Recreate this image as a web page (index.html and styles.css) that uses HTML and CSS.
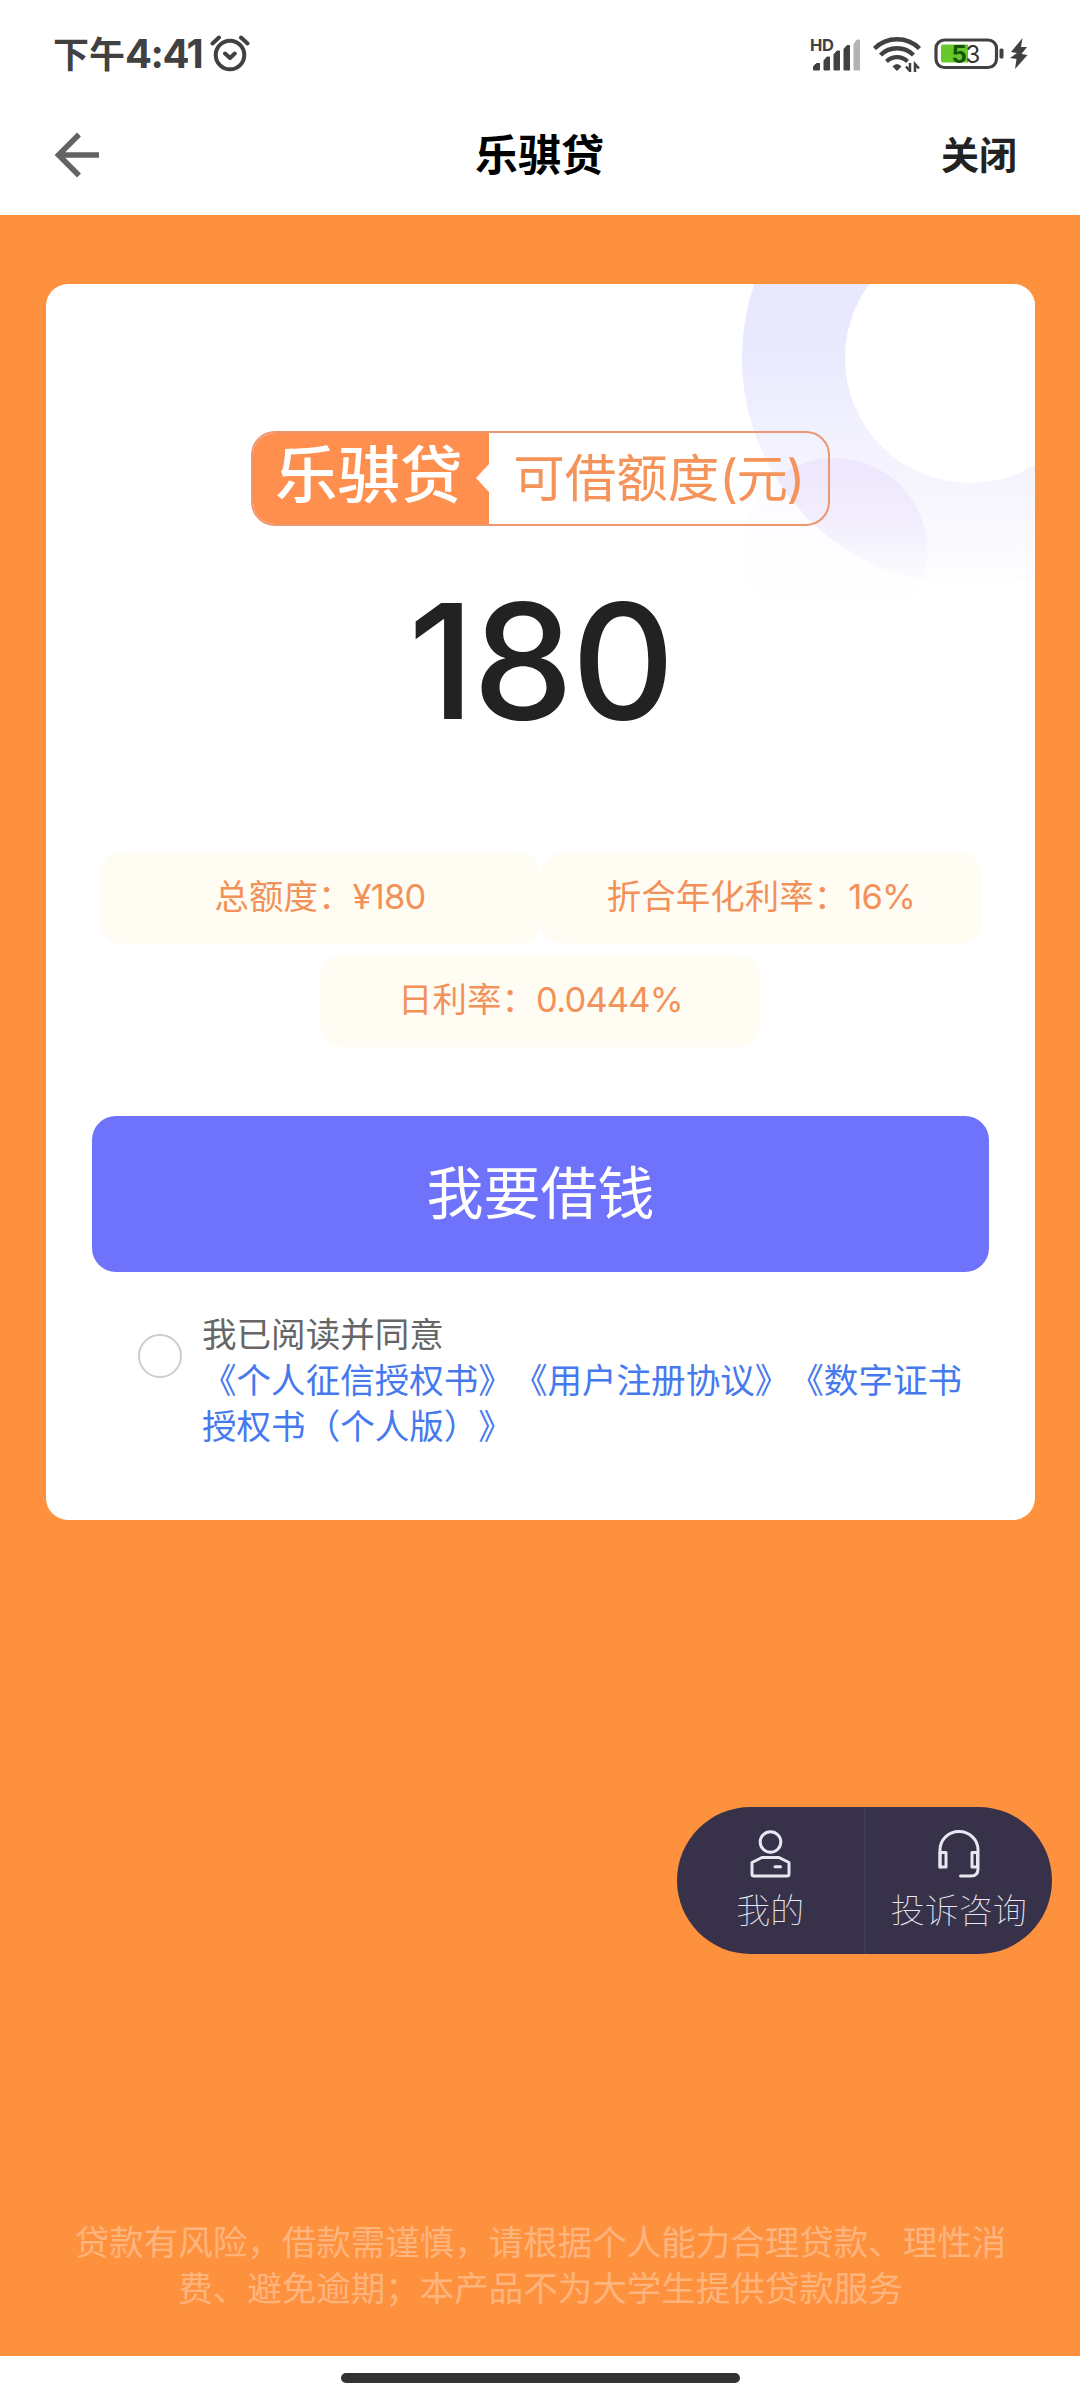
FILE: index.html
```html
<!DOCTYPE html>
<html lang="zh-CN">
<head>
<meta charset="utf-8">
<title>乐骐贷</title>
<link rel="stylesheet" href="styles.css">
</head>
<body>
<header class="top">
  <div class="status">
    <div class="status-left">
      <span class="time">下午<span class="clock">4:41</span></span>
      <svg class="alarm" width="40" height="38" viewBox="0 0 40 38" fill="none" stroke="#414141" stroke-width="4" stroke-linecap="round" stroke-linejoin="round">
        <circle cx="20" cy="21" r="14.3"/>
        <path d="M15 19.5l5 4.5 4.800-4.500M2.500 9.500l6.500-6M37.500 9.500l-6.500-6"/>
      </svg>
    </div>
    <div class="status-right">
      <svg class="signal" width="52" height="48" viewBox="0 -6 52 48">
        <text class="hd" x="0" y="14.500" textLength="24">HD</text>
        <g fill="#414141">
          <path d="M3.500 34V30.500l3-3h3V34zM14 34V24.500l3-3.500h2.500v13zM24 34V18.500l3-3.500h2.500V34zM34 34V13l3-3.500h2.500V34z" stroke="#414141" stroke-linejoin="round"/>
          <path d="M44 34V8l3-4h2.500V34z" fill="#b3b3b3" stroke="#b3b3b3" stroke-linejoin="round"/>
        </g>
      </svg>
      <svg class="wifi" width="48" height="36" viewBox="0 0 48 36" fill="none" stroke="#414141" stroke-width="4.300">
        <path d="M1.500 12.500a32 32 0 0 1 45 0M7.500 19a23.500 23.500 0 0 1 33 0M13.500 25.500a15 15 0 0 1 21 0"/>
        <path d="M24 35l-4.500-4.500q4.500-5 9 0z" fill="#414141" stroke="none"/>
        <path d="M37 27v8l-4-4.500M42 36v-8l4 4.500" stroke-width="2.500"/>
      </svg>
      <svg class="battery" width="70" height="32" viewBox="0 0 70 32">
        <rect x="2" y="2" width="60.500" height="27.500" rx="8.500" fill="none" stroke="#414141" stroke-width="3.200"/>
        <path d="M9 6.500h25v18H9a2 2 0 0 1-2-2v-14a2 2 0 0 1 2-2z" fill="#65c92b"/>
        <rect x="65.500" y="10.500" width="4" height="10" rx="1.500" fill="#414141"/>
        <text class="level level-on" x="17.500" y="24.500">5</text>
        <text class="level" x="31.500" y="24.500">3</text>
      </svg>
      <svg class="bolt" width="18" height="32" viewBox="0 0 18 32"><path d="M12.500 0L1 14l6 1-7 5 6.500 1L5 31 17.500 17l-6-1 5.500-7h-6z" fill="#414141"/></svg>
    </div>
  </div>
  <nav class="nav">
    <svg class="back" width="46" height="46" viewBox="0 0 46 46" fill="none" stroke="#636363" stroke-width="5.500"><path d="M25 2.500L4.500 23 25 43.500M5 23h40"/></svg>
    <h1 class="title">乐骐贷</h1>
    <span class="close">关闭</span>
  </nav>
</header>
<main class="page">
  <section class="card">
    <svg class="rings" width="294" height="366" viewBox="741 284 294 366">
      <defs>
        <linearGradient id="ring" gradientUnits="userSpaceOnUse" x1="0" y1="284" x2="0" y2="588">
          <stop offset="0" stop-color="#e8e8fe"/><stop offset=".25" stop-color="#eaeafe"/><stop offset=".5" stop-color="#f2f1fe"/><stop offset="1" stop-color="#fefefe"/>
        </linearGradient>
        <linearGradient id="dot" gradientUnits="userSpaceOnUse" x1="0" y1="458" x2="0" y2="588">
          <stop offset="0" stop-color="#dcc4fa" stop-opacity=".2"/><stop offset=".5" stop-color="#d8c4fa" stop-opacity=".17"/><stop offset="1" stop-color="#d8c8fa" stop-opacity="0"/>
        </linearGradient>
        <linearGradient id="haze" gradientUnits="userSpaceOnUse" x1="0" y1="458" x2="0" y2="630">
          <stop offset="0" stop-color="#e8d8fd" stop-opacity=".16"/><stop offset="1" stop-color="#f8f6ff" stop-opacity="0"/>
        </linearGradient>
        <clipPath id="ringClip"><circle cx="970" cy="358" r="228"/></clipPath>
      </defs>
      <circle cx="970" cy="358" r="228" fill="url(#ring)"/>
      <circle cx="834.500" cy="551" r="93" fill="url(#haze)"/>
      <circle cx="834.500" cy="551" r="93" fill="url(#dot)" clip-path="url(#ringClip)"/>
      <circle cx="970" cy="358" r="125" fill="#fff"/>
    </svg>
    <div class="badge">
      <span class="brand">乐骐贷<i class="notch"></i></span>
      <span class="caption">可借额度<span class="unit">(元)</span></span>
    </div>
    <div class="amount">180</div>
    <div class="pills">
      <span class="pill">总额度：<b>¥180</b></span>
      <span class="pill">折合年化利率：<b>16%</b></span>
      <span class="pill">日利率：<b>0.0444%</b></span>
    </div>
    <button class="borrow">我要借钱</button>
    <div class="agree">
      <span class="check"></span>
      <p class="terms">我已阅读并同意<br><a>《个人征信授权书》</a><a>《用户注册协议》</a><a>《数字证书<br>授权书（个人版）》</a></p>
    </div>
  </section>
  <div class="float">
    <div class="float-item">
      <svg width="42" height="48" viewBox="0 0 42 48" fill="none" stroke="#e9e7f2" stroke-width="3" stroke-linejoin="round" stroke-linecap="round">
        <circle cx="21.500" cy="12" r="10.300"/>
        <path d="M13 27.500h17l10 5V44q0 2-2 2H5q-2 0-2-2V32.500zM26 36.800h5.500"/>
      </svg>
      <span>我的</span>
    </div>
    <div class="float-item">
      <svg width="42" height="48" viewBox="0 0 42 48" fill="none" stroke="#e9e7f2" stroke-width="3" stroke-linejoin="round" stroke-linecap="round">
        <path d="M2 37V20a19 18.500 0 0 1 38 0v19q0 7-7 7H22.500"/>
        <path d="M2 22.500h6V37H2zM39.500 22.500H34V37h5.500z"/>
      </svg>
      <span>投诉咨询</span>
    </div>
  </div>
  <p class="notice">贷款有风险，借款需谨慎，请根据个人能力合理贷款、理性消<br>费、避免逾期；本产品不为大学生提供贷款服务</p>
</main>
<footer class="home"><span class="home-bar"></span></footer>
</body>
</html>
```
FILE: styles.css
```css
* { box-sizing: border-box; margin: 0; padding: 0; }
body {
  width: 1080px;
  height: 2400px;
  display: flex;
  flex-direction: column;
  background: #fff;
  font-family: Inter, "Noto Sans CJK SC", sans-serif;
  text-spacing-trim: space-all;
  color: #222;
  overflow: hidden;
}
svg { display: block; flex: none; }

.top { height: 215px; flex: none; }
.status {
  height: 108px;
  padding: 0 52px 0 53px;
  display: flex;
  justify-content: space-between;
  color: #414141;
}
.status-left, .status-right { display: flex; align-items: center; }
.time { font-size: 36px; line-height: 108px; font-weight: 700; white-space: nowrap; width: 149px; }
.clock { font-size: 40px; letter-spacing: -1.5px; }
.alarm { margin: 0 0 2px 8px; }
.signal { margin-right: 11px; }
.wifi { margin-right: 13px; }
.battery { margin-right: 6px; }
.hd { font: 700 16.500px Inter, sans-serif; fill: #414141; }
.level { font: 400 24px Inter, sans-serif; fill: #333; }
.level-on { font-weight: 700; fill: #15540a; }

.nav { height: 93px; display: grid; grid-template-columns: 1fr auto 1fr; align-items: center; padding: 0 63px 0 54px; }
.title { font-size: 43px; font-weight: 700; color: #000; line-height: 60px; padding-left: 8px; }
.close { justify-self: end; font-size: 38px; font-weight: 700; line-height: 60px; }

.page {
  height: 2141px;
  flex: none;
  background: #fe913d;
  padding: 69px 45px 0 46px;
  display: flex;
  flex-direction: column;
}
.card {
  height: 1236px;
  flex: none;
  border-radius: 22px;
  background: #fff;
  position: relative;
  overflow: hidden;
  padding: 147px 46px 0;
  display: flex;
  flex-direction: column;
  align-items: center;
}
.rings { position: absolute; top: 0; right: 0; }
.badge {
  position: relative;
  width: 579px;
  height: 95px;
  border: 2px solid #eb9870;
  border-radius: 24px;
  display: flex;
  overflow: hidden;
}
.brand {
  position: relative;
  margin: -2px 0 -2px -2px;
  background: #ff8f4e;
  color: #fff;
  font-size: 62.500px;
  font-weight: 500;
  line-height: 88px;
  padding-left: 24px;
  flex: 0 0 238px;
}
.notch {
  position: absolute;
  right: 0;
  top: 33px;
  width: 13px;
  height: 28px;
  background: #fff;
  clip-path: polygon(100% 0, 100% 100%, 0 50%);
}
.caption { flex: 1; text-align: center; font-size: 51.500px; line-height: 91px; color: #f4935a; white-space: nowrap; }
.unit { letter-spacing: -1.5px; }
.amount { margin-top: 35px; height: 200px; font-size: 160px; line-height: 200px; font-weight: 450; letter-spacing: -2px; color: #222; }
.pills { margin-top: 91px; width: 883px; display: flex; flex-wrap: wrap; justify-content: center; row-gap: 11px; }
.pill {
  width: 441px;
  height: 92px;
  border-radius: 22px;
  background: #fffdf3;
  color: #f3915a;
  font-size: 34.500px;
  line-height: 90px;
  text-align: center;
  white-space: nowrap;
}
.pill b { font-weight: 400; letter-spacing: -0.8px; }
.borrow {
  margin-top: 69px;
  width: 897px;
  height: 156px;
  flex: none;
  border: 0;
  border-radius: 24px;
  background: #6f72fa;
  color: #fff;
  font: inherit;
  font-size: 57px;
  line-height: 150px;
}
.agree { align-self: stretch; display: flex; margin-top: 40px; padding-left: 46px; }
.check { width: 44px; height: 44px; margin: 22px 20px 0 0; border: 2px solid #ccc; border-radius: 50%; }
.terms { font-size: 34.560px; line-height: 45.800px; color: #666; white-space: nowrap; }
.terms a { color: #4679ee; }

.float {
  align-self: flex-end;
  margin: 287px -17px 0 0;
  width: 375px;
  height: 147px;
  border-radius: 74px;
  background: #373249;
  display: flex;
  overflow: hidden;
}
.float-item {
  flex: 1;
  padding-top: 23px;
  display: flex;
  flex-direction: column;
  align-items: center;
  font-size: 34px;
  line-height: 50px;
  font-weight: 100;
  color: #e9e7f2;
}
.float-item + .float-item { border-left: 2px solid #403b55; }
.float-item span { margin-top: 8px; }
.notice {
  margin: 266px -46px 0 -46px;
  text-align: center;
  font-size: 34.500px;
  line-height: 46px;
  color: #feb47d;
}
.home { flex: 1; display: flex; justify-content: center; padding-top: 17px; }
.home-bar { width: 399px; height: 10px; border-radius: 5px; background: #333; }
```
